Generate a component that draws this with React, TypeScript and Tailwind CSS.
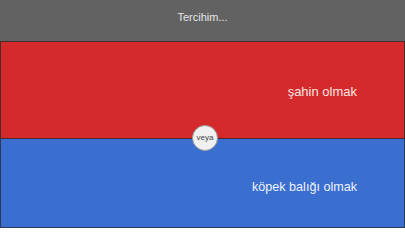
import React from 'react';

const App: React.FC = () => {
  return (
    <div className="relative flex h-[228px] w-[405px] flex-col overflow-hidden font-['Liberation_Sans',Arial,sans-serif]">
      <div className="flex h-[41px] items-center justify-center bg-[#626262] pb-[6px] text-[11px] text-[#e6e6e6]">
        Tercihim...
      </div>
      <div className="flex h-[98px] items-center justify-end border border-[#4a2a2a] bg-[#d52a2b] pr-[47px] pt-[4px] text-[13px] text-[#f6e6e6]">
        şahin olmak
      </div>
      <div className="flex flex-1 items-center justify-end border-x border-b border-[#2a3a5a] bg-[#3a6ecf] pr-[47px] pt-[8px] text-[12.6px] text-[#eef2fb]">
        köpek balığı olmak
      </div>
      <div className="absolute left-[192px] top-[125px] flex h-[26px] w-[26px] items-center justify-center rounded-full border border-[#9a9a9a] bg-[#f1f1f1] text-[8px] text-[#444]">
        veya
      </div>
    </div>
  );
};

export default App;
